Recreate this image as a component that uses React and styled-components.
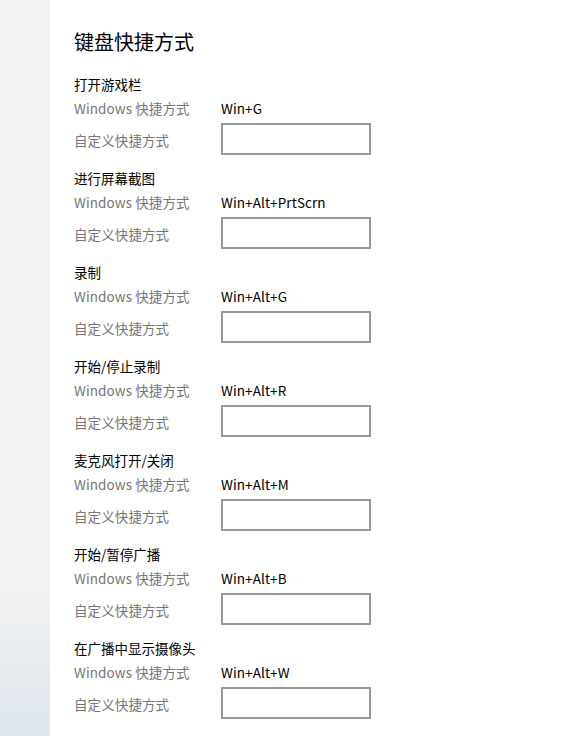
import React from 'react';
import styled, { createGlobalStyle } from 'styled-components';

const GlobalStyle = createGlobalStyle`
  html, body {
    margin: 0;
    padding: 0;
    background: #ffffff;
  }
  body {
    font-family: "Noto Sans CJK SC", "Noto Sans", sans-serif;
  }
`;

const Page = styled.div`
  display: flex;
  width: 576px;
  height: 736px;
  overflow: hidden;
`;

const Sidebar = styled.div`
  width: 50px;
  flex-shrink: 0;
  background: linear-gradient(to bottom, #f2f2f2 0%, #f2f2f2 80%, #dde5ee 100%);
`;

const Main = styled.div`
  flex: 1;
  padding: 29px 0 0 24px;
  background: #fff;
`;

const Title = styled.h1`
  margin: 0 0 18px 0;
  font-size: 20px;
  line-height: 26px;
  font-weight: 400;
  color: #000;
  padding-bottom: 2px;
`;

const Section = styled.div`
  display: flex;
  flex-direction: column;
  margin-bottom: 14px;
`;

const SectionName = styled.div`
  font-size: 13.5px;
  line-height: 18px;
  color: #000;
  margin-bottom: 5px;
`;

const Row = styled.div`
  display: flex;
  align-items: center;
  height: ${p => (p.tall ? '32px' : '20px')};
  margin-bottom: ${p => (p.tall ? '0' : '4px')};
  margin-top: ${p => (p.tall ? '1px' : '0')};
`;

const Label = styled.div`
  width: 147px;
  font-size: 13.5px;
  line-height: 18px;
  color: #767676;
  letter-spacing: 0.1px;
  padding-top: ${p => (p.shift ? '2px' : '0')};
`;

const Value = styled.div`
  font-size: 13.5px;
  line-height: 18px;
  letter-spacing: 0.1px;
  color: #000;
`;

const KeyInput = styled.input`
  box-sizing: border-box;
  width: 150px;
  height: 32px;
  border: 2px solid #999999;
  background: #fff;
  padding: 0 8px;
  margin: 0;
  outline: none;
  font-family: inherit;
  font-size: 14px;
`;

const shortcuts = [
  { name: '打开游戏栏', keys: 'Win+G' },
  { name: '进行屏幕截图', keys: 'Win+Alt+PrtScrn' },
  { name: '录制', keys: 'Win+Alt+G' },
  { name: '开始/停止录制', keys: 'Win+Alt+R' },
  { name: '麦克风打开/关闭', keys: 'Win+Alt+M' },
  { name: '开始/暂停广播', keys: 'Win+Alt+B' },
  { name: '在广播中显示摄像头', keys: 'Win+Alt+W' },
];

export default function App() {
  return (
    <>
      <GlobalStyle />
      <Page>
        <Sidebar />
        <Main>
          <Title>键盘快捷方式</Title>
          {shortcuts.map(s => (
            <Section key={s.name}>
              <SectionName>{s.name}</SectionName>
              <Row>
                <Label>Windows 快捷方式</Label>
                <Value>{s.keys}</Value>
              </Row>
              <Row tall>
                <Label shift>自定义快捷方式</Label>
                <KeyInput type="text" />
              </Row>
            </Section>
          ))}
        </Main>
      </Page>
    </>
  );
}
